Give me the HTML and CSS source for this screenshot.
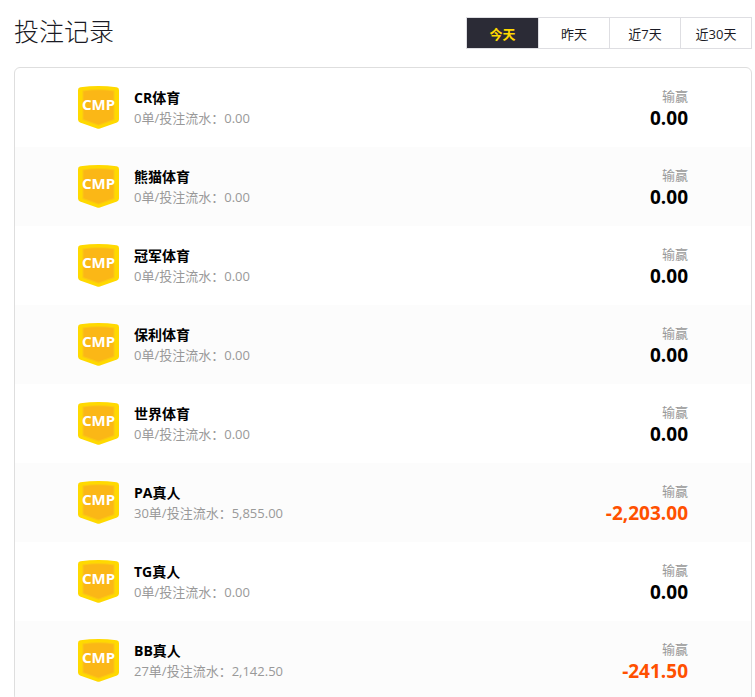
FILE: index.html
```
<!DOCTYPE html>
<html lang="zh-CN">
<head>
  <meta charset="UTF-8">
  <title>投注记录</title>
  <meta name="viewport" content="width=device-width, initial-scale=1.0">
  <link rel="stylesheet" href="styles.css">
</head>
<body>

  <!-- 盾牌图标 -->
  <svg class="sprite" aria-hidden="true">
    <symbol id="badge" viewBox="0 0 41 43">
      <path fill="#ffd900" d="M2.500 1.200Q20.500 -1 38.500 1.200Q41 1.500 41 4V33.500Q41 35.500 39 36.500L22 42.500Q20.500 43.200 19 42.500L2 36.500Q0 35.500 0 33.500V4Q0 1.500 2.500 1.200Z"/>
      <path fill="#fbc614" d="M4.500 4.500Q20.500 2 36.500 4.500V34L20.500 39.800L4.500 34Z"/>
      <path fill="#fbb716" d="M5.500 5.500Q20.500 3 35.500 5.500V33L20.500 38.500L5.500 33Z"/>
      <text class="badge-text" x="20.5" y="24" text-anchor="middle">CMP</text>
    </symbol>
  </svg>

  <main class="page">
    <header class="header">
      <h1 class="title">投注记录</h1>
      <nav class="tabs">
        <button class="tab active" type="button">今天</button>
        <button class="tab" type="button">昨天</button>
        <button class="tab" type="button">近7天</button>
        <button class="tab" type="button">近30天</button>
      </nav>
    </header>

    <ul class="records">
      <li class="record">
        <svg class="badge"><use href="#badge"/></svg>
        <div class="info">
          <div class="name">CR体育</div>
          <div class="detail">0单/投注流水：0.00</div>
        </div>
        <div class="result">
          <div class="label">输赢</div>
          <div class="amount">0.00</div>
        </div>
      </li>
      <li class="record">
        <svg class="badge"><use href="#badge"/></svg>
        <div class="info">
          <div class="name">熊猫体育</div>
          <div class="detail">0单/投注流水：0.00</div>
        </div>
        <div class="result">
          <div class="label">输赢</div>
          <div class="amount">0.00</div>
        </div>
      </li>
      <li class="record">
        <svg class="badge"><use href="#badge"/></svg>
        <div class="info">
          <div class="name">冠军体育</div>
          <div class="detail">0单/投注流水：0.00</div>
        </div>
        <div class="result">
          <div class="label">输赢</div>
          <div class="amount">0.00</div>
        </div>
      </li>
      <li class="record">
        <svg class="badge"><use href="#badge"/></svg>
        <div class="info">
          <div class="name">保利体育</div>
          <div class="detail">0单/投注流水：0.00</div>
        </div>
        <div class="result">
          <div class="label">输赢</div>
          <div class="amount">0.00</div>
        </div>
      </li>
      <li class="record">
        <svg class="badge"><use href="#badge"/></svg>
        <div class="info">
          <div class="name">世界体育</div>
          <div class="detail">0单/投注流水：0.00</div>
        </div>
        <div class="result">
          <div class="label">输赢</div>
          <div class="amount">0.00</div>
        </div>
      </li>
      <li class="record">
        <svg class="badge"><use href="#badge"/></svg>
        <div class="info">
          <div class="name">PA真人</div>
          <div class="detail">30单/投注流水：5,855.00</div>
        </div>
        <div class="result">
          <div class="label">输赢</div>
          <div class="amount loss">-2,203.00</div>
        </div>
      </li>
      <li class="record">
        <svg class="badge"><use href="#badge"/></svg>
        <div class="info">
          <div class="name">TG真人</div>
          <div class="detail">0单/投注流水：0.00</div>
        </div>
        <div class="result">
          <div class="label">输赢</div>
          <div class="amount">0.00</div>
        </div>
      </li>
      <li class="record">
        <svg class="badge"><use href="#badge"/></svg>
        <div class="info">
          <div class="name">BB真人</div>
          <div class="detail">27单/投注流水：2,142.50</div>
        </div>
        <div class="result">
          <div class="label">输赢</div>
          <div class="amount loss">-241.50</div>
        </div>
      </li>
    </ul>
  </main>

</body>
</html>
```

FILE: styles.css
```
* {
  box-sizing: border-box;
}

body {
  margin: 0;
  background: #fff;
  color: #000;
  font-family: "Open Sans", "Noto Sans CJK SC", sans-serif;
  font-size: 13px;
}

.sprite {
  display: none;
}

.page {
  padding: 13px 3px 0 14px;
}

.header {
  display: flex;
  justify-content: space-between;
  align-items: flex-end;
  margin-bottom: 18px;
}

.title {
  margin: 0;
  color: #1a1a24;
  font-size: 25px;
  font-weight: 300;
  line-height: 36px;
}

.tabs {
  display: flex;
  border: 1px solid #dedee2;
}

.tab {
  width: 71px;
  height: 30px;
  padding: 0;
  border: 0;
  border-left: 1px solid #dedee2;
  background: #fff;
  color: #1a1a24;
  font: inherit;
  cursor: pointer;
}

.tab.active {
  border-left: 0;
  background: #2b2b36;
  color: #ffd900;
  font-weight: bold;
}

.records {
  margin: 0;
  padding: 0;
  border: 1px solid #dedede;
  border-radius: 6px;
  list-style: none;
  overflow: hidden;
}

.record {
  display: flex;
  align-items: center;
  height: 79px;
  padding: 0 63px;
}

.record:nth-child(even) {
  background: #fcfcfc;
}

.badge {
  width: 41px;
  height: 43px;
}

.badge-text {
  fill: #fff;
  font-family: "Noto Sans", sans-serif;
  font-size: 15px;
  font-weight: bold;
}

.info {
  flex: 1;
  margin-left: 15px;
  line-height: 20px;
}

.name {
  font-size: 14px;
  font-weight: bold;
}

.detail,
.label {
  color: #999;
}

.result {
  text-align: right;
  line-height: 20px;
}

.amount {
  font-size: 19px;
  font-weight: bold;
  line-height: 24px;
}

.loss {
  color: #ff5000;
}
```
